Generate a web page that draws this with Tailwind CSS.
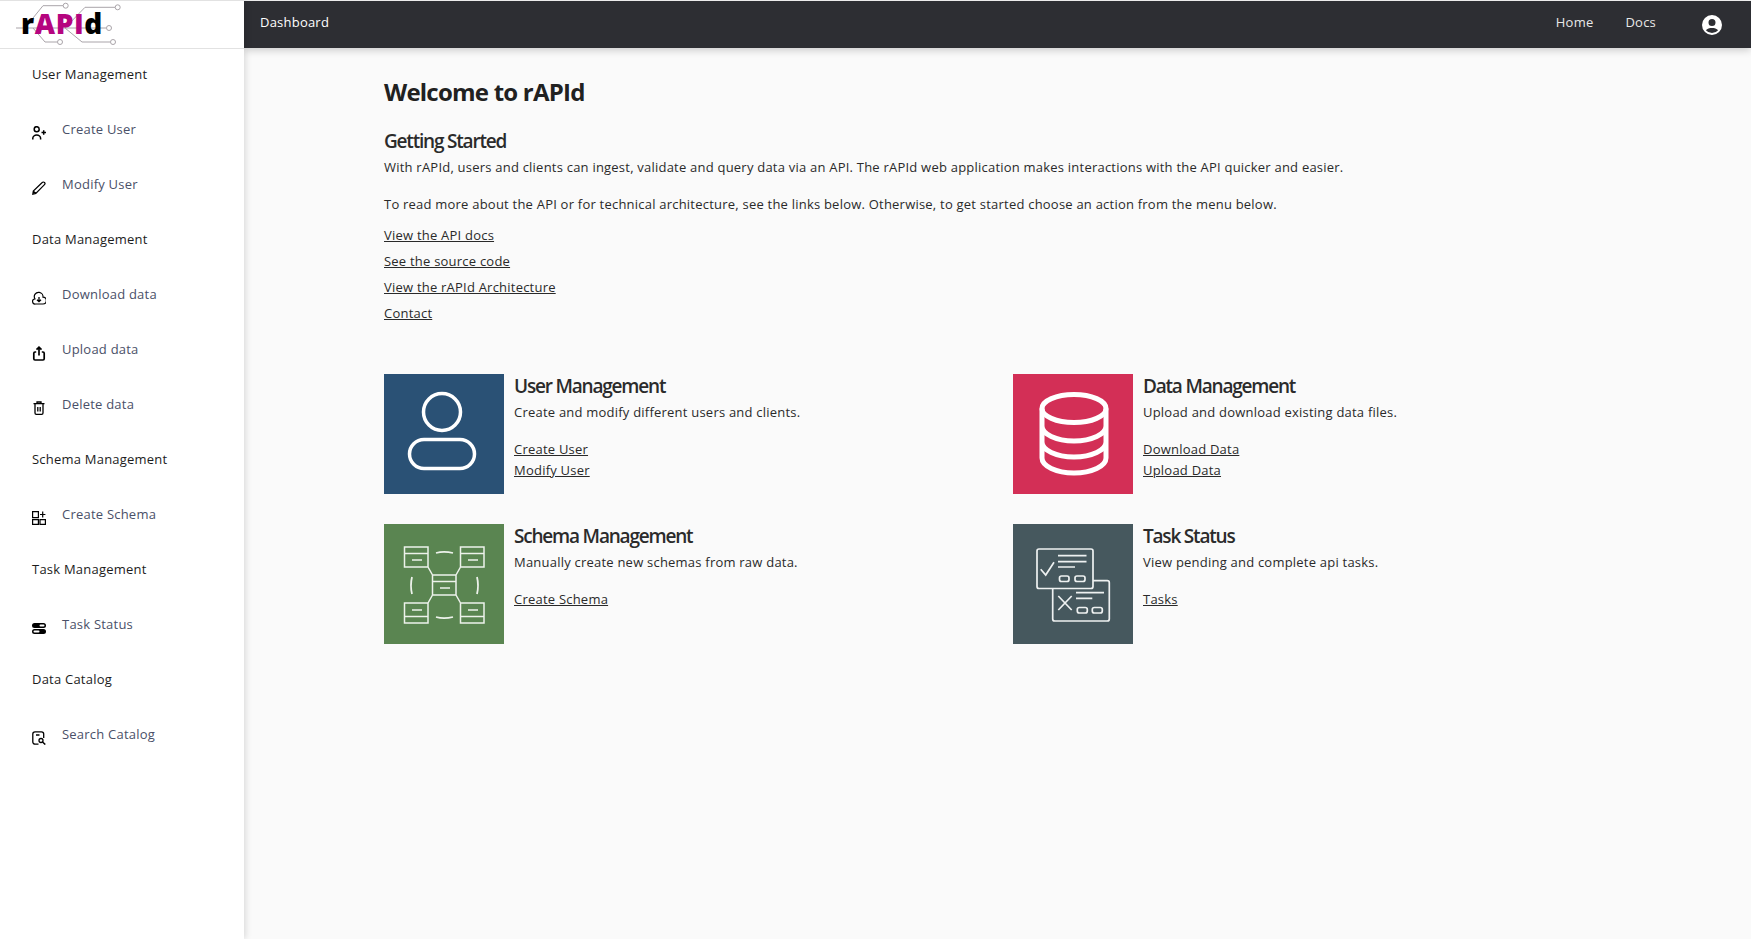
<!DOCTYPE html>
<html lang="en">
<head>
    <meta charset="UTF-8" />
    <meta name="viewport" content="width=device-width, initial-scale=1.0" />
    <title>rAPId</title>
    <script src="https://cdn.jsdelivr.net/npm/@tailwindcss/browser@4"></script>
</head>
<body class="bg-[#fafafa] font-['Open_Sans',sans-serif] text-[13px] text-[#2a2a2a] tracking-[0.22px]">
    <div class="flex h-[939px] overflow-hidden">
        <!-- sidebar -->
        <aside class="w-[244px] shrink-0 h-full bg-white shadow-[2px_0_6px_rgba(0,0,0,0.12)] z-10">
            <div class="h-[49px] border-t border-b border-[#e2e2e2] pl-[16px]">
                <svg width="110" height="47" viewBox="0 0 110 47" fill="none">
                    <g stroke="#a9a4a9" stroke-width="1">
                        <path d="M0 27H90M17 17L27 4.700H47M99 6.300H69L49 27M41 41H29L17 27M94 41H66L49 27" />
                        <circle cx="49.700" cy="4.700" r="2.500" fill="#fff" /><circle cx="101.700" cy="6.300" r="2.500" fill="#fff" />
                        <circle cx="93" cy="27" r="2.500" fill="#fff" /><circle cx="44" cy="41" r="2.500" fill="#fff" /><circle cx="97" cy="41" r="2.500" fill="#fff" />
                    </g>
                    <text x="5" y="33" font-family="Open Sans" font-weight="800" font-size="28" letter-spacing="0.600" fill="#000">r<tspan fill="#b5057f">API</tspan>d</text>
                </svg>
            </div>
            <nav class="pl-[32px] -mt-[2px]">
                <div class="h-[55px] flex items-center text-[#1c1c1c]">User Management</div>
                <a class="h-[55px] flex items-center text-[#4a5068]"><svg class="w-[14px] h-[14px] mr-[16px] mt-[7px]" viewBox="0 0 14 14" fill="none" stroke="#000" stroke-width="1.500"><circle cx="4.700" cy="3.200" r="2.500"/><path d="M.8 13.500v-1.200a3.900 3.300 0 0 1 7.800 0v1.200M9.500 6.500h4.500M11.700 4.200v4.600"/></svg>Create User</a>
                <a class="h-[55px] flex items-center text-[#4a5068]"><svg class="w-[14px] h-[14px] mr-[16px] mt-[7px]" viewBox="0 0 14 14" fill="none" stroke="#000" stroke-width="1.200"><path d="M.8 13.200l.5-3.200 8.900-8.500a1.300 1.300 0 0 1 2.300 2.200L3.800 12.500zM1.300 10l2.500 2.500"/></svg>Modify User</a>
                <div class="h-[55px] flex items-center text-[#1c1c1c]">Data Management</div>
                <a class="h-[55px] flex items-center text-[#4a5068]"><svg class="w-[14px] h-[14px] mr-[16px] mt-[7px]" viewBox="0 0 14 14" fill="none" stroke="#000" stroke-width="1.200"><path d="M3.500 13A2.600 2.600 0 0 1 2.900 7.800 4.300 4.300 0 0 1 7.300 1.400 4.400 4.400 0 0 1 11 6.200 3.400 3.400 0 0 1 10.800 13z"/><path d="M7 6v4.500M5 8.700l2 2 2-2" stroke-width="1.300"/></svg>Download data</a>
                <a class="h-[55px] flex items-center text-[#4a5068]"><svg class="w-[14px] h-[15px] mr-[16px] mt-[7px]" viewBox="0 0 14 15" fill="none" stroke="#000" stroke-width="1.700"><path d="M4.200 6H3a1.200 1.200 0 0 0-1.200 1.200v5.600A1.200 1.200 0 0 0 3 14h8a1.200 1.200 0 0 0 1.200-1.200V7.200A1.200 1.200 0 0 0 11 6H9.800M7 9.500V1.500M4.500 3.700L7 1.200l2.500 2.500"/></svg>Upload data</a>
                <a class="h-[55px] flex items-center text-[#4a5068]"><svg class="w-[14px] h-[14px] mr-[16px] mt-[7px]" viewBox="0 0 14 14" fill="none" stroke="#000" stroke-width="1.300"><path d="M1.500 2.700h11M5 2.500V1h4v1.500M3 3v9a1.300 1.300 0 0 0 1.300 1.300h5.400A1.300 1.300 0 0 0 11 12V3M5.800 6v4.500M8.200 6v4.500"/></svg>Delete data</a>
                <div class="h-[55px] flex items-center text-[#1c1c1c]">Schema Management</div>
                <a class="h-[55px] flex items-center text-[#4a5068]"><svg class="w-[14px] h-[14px] mr-[16px] mt-[7px]" viewBox="0 0 14 14" fill="none" stroke="#000" stroke-width="1.200"><path d="M.6.6h5.800v6H.6zM.6 8.700h5.800v4.700H.6zM8 8.700h5.400v4.700H8zM8 3.500h5.400M10.700.6v5.800"/></svg>Create Schema</a>
                <div class="h-[55px] flex items-center text-[#1c1c1c]">Task Management</div>
                <a class="h-[55px] flex items-center text-[#4a5068]"><svg class="w-[14px] h-[11px] mr-[16px] mt-[7px]" viewBox="0 0 14 11" fill="#000"><rect x="0" y="0" width="14" height="5" rx="2.500"/><rect x="0" y="6" width="14" height="5" rx="2.500"/><rect x="7.500" y="1.500" width="5" height="2" rx="1" fill="#fff"/><rect x="1.500" y="7.500" width="6" height="2" rx="1" fill="#fff"/></svg>Task Status</a>
                <div class="h-[55px] flex items-center text-[#1c1c1c]">Data Catalog</div>
                <a class="h-[55px] flex items-center text-[#4a5068]"><svg class="w-[14px] h-[14px] mr-[16px] mt-[7px]" viewBox="0 0 14 14" fill="none" stroke="#000" stroke-width="1.300"><path d="M6.500 13.200H3A2.200 2.200 0 0 1 .8 11V3A2.200 2.200 0 0 1 3 .8h6.500A2.200 2.200 0 0 1 11.700 3v4M4 4h3.500"/><circle cx="9" cy="9.500" r="2"/><path d="M10.500 11l2.800 2.500" stroke-width="1.500"/></svg>Search Catalog</a>
            </nav>
        </aside>
        <div class="flex-1 min-w-0 flex flex-col">
            <!-- top bar -->
            <header class="h-[47px] mt-[1px] bg-[#2d2e33] text-white shadow-[0_2px_8px_rgba(0,0,0,0.2)] flex items-center pl-[16px] pr-[27px] shrink-0">
                <span class="-mt-[3px]">Dashboard</span>
                <span class="ml-auto -mt-[3px] text-[#e8e8e8]">Home</span>
                <span class="ml-[32px] -mt-[3px] text-[#e8e8e8]">Docs</span>
                <svg class="ml-[44px] w-[24px] h-[24px] mt-[1px]" viewBox="0 0 24 24" fill="#fff"><path d="M12 2a10 10 0 1 0 0 20 10 10 0 0 0 0-20zm0 4a3.500 3.500 0 1 1 0 7 3.500 3.500 0 0 1 0-7zm0 14a8 8 0 0 1-6.100-2.830C7.200 15.500 9.500 15 12 15s4.800.5 6.100 2.170A8 8 0 0 1 12 20z"/></svg>
            </header>
            <main class="pl-[140px] pt-[28px]">
                <h1 class="text-[24px] leading-[32px] font-bold tracking-[-0.78px] text-[#212121]">Welcome to rAPId</h1>
                <h2 class="mt-[17px] text-[19px] leading-[32px] font-semibold tracking-[-1.2px] text-[#2b2b2b]">Getting Started</h2>
                <p class="leading-[20px]">With rAPId, users and clients can ingest, validate and query data via an API. The rAPId web application makes interactions with the API quicker and easier.</p>
                <p class="leading-[20px] mt-[17px]">To read more about the API or for technical architecture, see the links below. Otherwise, to get started choose an action from the menu below.</p>
                <div class="mt-[11px] flex flex-col gap-[6px] items-start leading-[20px]">
                    <a class="underline">View the API docs</a>
                    <a class="underline">See the source code</a>
                    <a class="underline">View the rAPId Architecture</a>
                    <a class="underline">Contact</a>
                </div>
                <div class="mt-[51px] grid grid-cols-[629px_1fr] gap-y-[30px]">
                    <div class="flex h-[120px]">
                        <div class="w-[120px] h-[120px] bg-[#2a5175]">
                            <svg width="120" height="120" viewBox="0 0 120 120" fill="none" stroke="#fff" stroke-width="3.500"><circle cx="58" cy="38" r="18.500"/><rect x="25.500" y="65.500" width="65" height="29" rx="14.500"/></svg>
                        </div>
                        <div class="ml-[10px]">
                            <h3 class="text-[19px] leading-[24px] font-semibold tracking-[-1.2px] text-[#2b2b2b]">User Management</h3>
                            <p class="leading-[20px] mt-[4px]">Create and modify different users and clients.</p>
                            <div class="mt-[17px] flex flex-col items-start leading-[21px]"><a class="underline">Create User</a><a class="underline">Modify User</a></div>
                        </div>
                    </div>
                    <div class="flex h-[120px]">
                        <div class="w-[120px] h-[120px] bg-[#d32f56]">
                            <svg width="120" height="120" viewBox="0 0 120 120" fill="none" stroke="#fff" stroke-width="5"><ellipse cx="61" cy="34.500" rx="32" ry="14"/><path d="M29 34.500V84c0 8 14 15 32 15s32-7 32-15V34.500M29 52c0 8 14 15 32 15s32-7 32-15M29 68c0 8 14 15 32 15s32-7 32-15"/></svg>
                        </div>
                        <div class="ml-[10px]">
                            <h3 class="text-[19px] leading-[24px] font-semibold tracking-[-1.2px] text-[#2b2b2b]">Data Management</h3>
                            <p class="leading-[20px] mt-[4px]">Upload and download existing data files.</p>
                            <div class="mt-[17px] flex flex-col items-start leading-[21px]"><a class="underline">Download Data</a><a class="underline">Upload Data</a></div>
                        </div>
                    </div>
                    <div class="flex h-[120px]">
                        <div class="w-[120px] h-[120px] bg-[#5a8551]">
                            <svg width="120" height="120" viewBox="0 0 120 120" fill="none" stroke="#edf2eb" stroke-width="1.500">
                                <path d="M20.500 23h23.500v20H20.500zM20.500 29.500H44M28 36h10M76.500 23H100v20H76.500zM76.500 29.500H100M84 36h10M48.500 51H72v20H48.500zM48.500 57.500H72M56 64h10M20.500 79H44v20H20.500zM20.500 92.500H44M28 86h10M76.500 79H100v20H76.500zM76.500 92.500H100M84 86h10M44 43l4.500 8M76.500 43L72 51M44 79l4.500-8M76.500 79L72 71"/>
                                <path d="M52 29c5-1.500 11-1.500 17 0M52 93c5 1.500 11 1.500 17 0M28 53c-1.200 5-1.200 12 0 17M93 53c1.200 5 1.200 12 0 17" stroke-width="1.800"/>
                            </svg>
                        </div>
                        <div class="ml-[10px]">
                            <h3 class="text-[19px] leading-[24px] font-semibold tracking-[-1.2px] text-[#2b2b2b]">Schema Management</h3>
                            <p class="leading-[20px] mt-[4px]">Manually create new schemas from raw data.</p>
                            <div class="mt-[17px] flex flex-col items-start leading-[21px]"><a class="underline">Create Schema</a></div>
                        </div>
                    </div>
                    <div class="flex h-[120px]">
                        <div class="w-[120px] h-[120px] bg-[#46585e]">
                            <svg width="120" height="120" viewBox="0 0 120 120" fill="none" stroke="#eef1f1" stroke-width="1.700">
                                <rect x="24" y="25" width="56" height="39.500" rx="2"/>
                                <path d="M45 31.700h28.500M45 37.700h28.500M45 43h17M27.700 45.300l5 5.700 8.300-12.700" />
                                <rect x="46.500" y="52" width="9.500" height="5.500" rx="2"/><rect x="62" y="52" width="10" height="5.500" rx="2"/>
                                <path d="M80 56.700h14.300a2 2 0 0 1 2 2V95a2 2 0 0 1-2 2H41.700a2 2 0 0 1-2-2V64.500M63 68.700h28M63 74.300h16.300M45.300 72l13.400 14M58.700 72L45.300 86"/>
                                <rect x="64.300" y="83.500" width="10" height="5.500" rx="2"/><rect x="79.300" y="83.500" width="10" height="5.500" rx="2"/>
                            </svg>
                        </div>
                        <div class="ml-[10px]">
                            <h3 class="text-[19px] leading-[24px] font-semibold tracking-[-1.2px] text-[#2b2b2b]">Task Status</h3>
                            <p class="leading-[20px] mt-[4px]">View pending and complete api tasks.</p>
                            <div class="mt-[17px] flex flex-col items-start leading-[21px]"><a class="underline">Tasks</a></div>
                        </div>
                    </div>
                </div>
            </main>
        </div>
    </div>
</body>
</html>
